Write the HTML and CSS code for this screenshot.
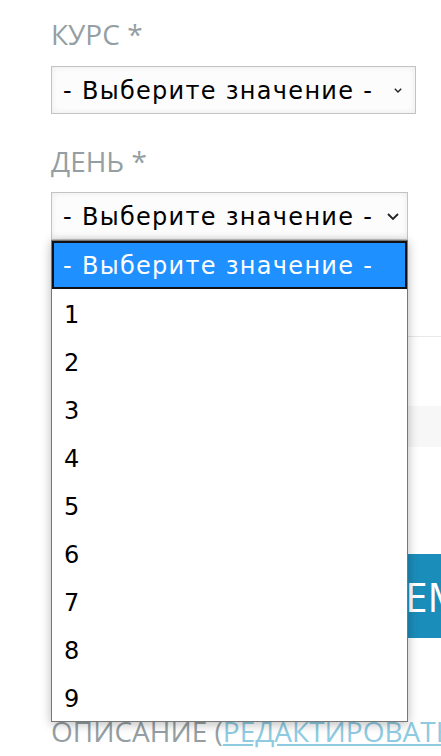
FILE: index.html
```html
<!DOCTYPE html>
<html lang="ru">
<head>
<meta charset="utf-8">
<title>Форма</title>
<link rel="stylesheet" href="styles.css">
</head>
<body>
<main class="form">
  <div class="field">
    <div class="label">КУРС *</div>
    <div class="select select-wide">
      <span class="select-text">- Выберите значение -</span>
      <svg class="chev chev-small" viewBox="0 0 8 5"><path d="M0.8 0.8 L4 4 L7.2 0.8" fill="none" stroke="#222" stroke-width="1.4"/></svg>
    </div>
  </div>
  <div class="field field-day">
    <div class="label">ДЕНЬ *</div>
    <div class="select-wrap">
      <div class="select select-narrow">
        <span class="select-text">- Выберите значение -</span>
        <svg class="chev chev-big" viewBox="0 0 12 7"><path d="M1 1 L6 6 L11 1" fill="none" stroke="#222" stroke-width="1.8"/></svg>
      </div>
      <ul class="dropdown">
        <li class="opt opt-active">- Выберите значение -</li>
        <li class="opt">1</li>
        <li class="opt">2</li>
        <li class="opt">3</li>
        <li class="opt">4</li>
        <li class="opt">5</li>
        <li class="opt">6</li>
        <li class="opt">7</li>
        <li class="opt">8</li>
        <li class="opt">9</li>
      </ul>
    </div>
  </div>
  <hr class="divider">
  <div class="band"></div>
  <button class="submit">ВЫБРАТЬ ВРЕМЯ</button>
  <div class="label label-desc">ОПИСАНИЕ (<a href="#" class="edit">РЕДАКТИРОВАТЬ</a>)</div>
</main>
</body>
</html>
```

FILE: styles.css
```css
html, body {
  margin: 0;
  padding: 0;
  background: #fff;
}
body {
  width: 441px;
  height: 756px;
  overflow: hidden;
}
.form {
  padding: 16px 0 0 51px;
  display: flex;
  flex-direction: column;
  align-items: flex-start;
}
.label {
  font-family: "Open Sans", sans-serif;
  font-size: 28px;
  line-height: 37px;
  color: #959fa3;
  white-space: nowrap;
}
.field {
  display: flex;
  flex-direction: column;
}
.field-day {
  margin-top: 29px;
}
.select {
  margin-top: 13px;
  height: 48px;
  box-sizing: border-box;
  border: 1px solid #c3c3c3;
  background: #fcfcfc;
  box-shadow: inset 0 0 6px rgba(0,0,0,0.08);
  display: flex;
  align-items: center;
  padding-left: 11px;
  font-family: "DejaVu Sans", sans-serif;
  font-size: 24px;
  letter-spacing: 1.3px;
  color: #000;
  white-space: nowrap;
}
.select-wide { width: 365px; }
.select-narrow { width: 357px; margin-top: 12px; }
.select-text { flex: 1; padding-top: 2px; }
.chev { display: block; flex: none; }
.chev-small { width: 8px; height: 5px; margin-right: 13px; }
.chev-big { width: 12px; height: 7px; margin-right: 8px; }
.select-wrap {
  position: relative;
}
.dropdown {
  position: absolute;
  left: 0;
  top: 100%;
  width: 357px;
  margin: 0;
  padding: 0;
  list-style: none;
  box-sizing: border-box;
  border: 1px solid #777;
  background: #fff;
  box-shadow: 0 2px 10px rgba(0,0,0,0.28);
  z-index: 5;
}
.opt {
  height: 48px;
  box-sizing: border-box;
  padding: 3px 0 0 12px;
  display: flex;
  align-items: center;
  font-family: "DejaVu Sans", sans-serif;
  font-size: 24px;
  letter-spacing: 1.3px;
  color: #000;
  white-space: nowrap;
}
.opt-active {
  background: #1e90ff;
  color: #fff;
  outline: 2px solid #111;
  outline-offset: -2px;
  padding: 1px 0 0 11px;
}
.divider {
  align-self: stretch;
  margin: 96px 0 0 0;
  border: 0;
  border-top: 1px solid #e8e8e8;
  height: 0;
}
.band {
  margin-top: 69px;
  width: 420px;
  height: 41px;
  background: #f7f7f7;
}
.submit {
  margin-top: 107px;
  width: 520px;
  height: 84px;
  border: 0;
  background: #1b8dba;
  color: #fff;
  font-family: "Open Sans", sans-serif;
  font-size: 40px;
  text-align: left;
  padding: 0 0 0 113px;
}
.label-desc {
  margin-top: 75px;
}
.edit {
  color: #8ecbe2;
  text-decoration: underline;
}
```
